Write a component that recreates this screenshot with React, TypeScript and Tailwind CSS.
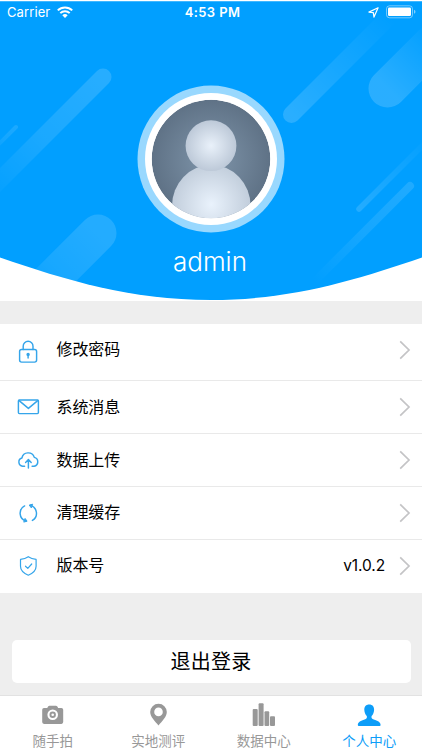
import type { ReactNode } from "react";

interface MenuRow {
  label: string;
  icon: ReactNode;
  height: string;
  value?: string;
}

interface TabItem {
  label: string;
  icon: ReactNode;
  active?: boolean;
}

const lineIcon = {
  width: 24,
  height: 24,
  viewBox: "0 0 24 24",
  fill: "none",
  stroke: "#35a5ea",
  strokeWidth: 1.45,
  strokeLinecap: "round" as const,
  strokeLinejoin: "round" as const,
};

const rows: MenuRow[] = [
  {
    label: "修改密码",
    height: "h-[57px] pb-[5px]",
    icon: (
      <svg {...lineIcon} className="relative top-[2px]">
        <path d="M7.2 9.5V6.2a4.9 4.9 0 0 1 9.8 0v3.3" />
        <rect x="3.6" y="9.5" width="17" height="12.6" rx="2" />
        <circle cx="12.1" cy="14.4" r="1" fill="#35a5ea" />
        <path d="M12.1 15v3" />
      </svg>
    ),
  },
  {
    label: "系统消息",
    height: "h-[53px]",
    icon: (
      <svg {...lineIcon}>
        <rect x="2.4" y="5" width="20" height="13.6" rx="1" />
        <path d="M2.8 5.4 12.4 13.4l9.6-8" />
      </svg>
    ),
  },
  {
    label: "数据上传",
    height: "h-[53px]",
    icon: (
      <svg {...lineIcon}>
        <path d="M8.6 18.2H6.6A4.2 4.2 0 0 1 5.9 10a6.4 6.4 0 0 1 12.4-.6 4.5 4.5 0 0 1-.2 8.8h-2" />
        <path d="M12.4 20v-8M9.6 14.4l2.8-2.8 2.8 2.8" />
      </svg>
    ),
  },
  {
    label: "清理缓存",
    height: "h-[53px] pb-[1px]",
    icon: (
      <svg {...lineIcon}>
        <path d="M8.6 4.9A8.2 8.2 0 0 0 9.8 20M16.4 19.4A8.2 8.2 0 0 0 14.4 4.4" />
        <path d="M16.3 3.3 13.2 4.1l1.9 2.5zM8.1 21l3-.8-1.8-2.5z" fill="#35a5ea" strokeWidth="1" />
      </svg>
    ),
  },
  {
    label: "版本号",
    height: "h-[53px] pb-[2px]",
    value: "v1.0.2",
    icon: (
      <svg {...lineIcon} strokeWidth={1.2}>
        <path d="M12.3 2.7c2.4 1.7 5 2.4 7.8 2.7v6.8c0 4.4-3.7 7.2-7.8 9-4.1-1.8-7.8-4.6-7.8-9V5.4c2.8-.3 5.4-1 7.8-2.7Z" />
        <path d="m9.5 12.2 2.3 2.2 3.9-4.4" />
      </svg>
    ),
  },
];

const tabs: TabItem[] = [
  {
    label: "随手拍",
    icon: (
      <svg width="24" height="24" viewBox="0 0 24 24" fill="currentColor">
        <path
          fillRule="evenodd"
          d="M6.6 4.2Q7.1 2.7 8.4 2.7h6.6q1.3 0 1.8 1.5l.3.7h3.3q1.8 0 1.8 1.8v12.4q0 1.8-1.8 1.8H3q-1.800 0-1.800-1.800V6.700Q1.200 4.900 3 4.900h3.300zM11.700 6.500a5.300 5.300 0 1 0 0 10.600 5.300 5.300 0 0 0 0-10.600zm0 2.100a3.200 3.200 0 1 1 0 6.400 3.200 3.200 0 0 1 0-6.400zm0 1.900a1.300 1.300 0 1 0 0 2.600 1.300 1.300 0 0 0 0-2.600z"
        />
      </svg>
    ),
  },
  {
    label: "实地测评",
    icon: (
      <svg width="24" height="24" viewBox="0 0 24 24" fill="currentColor">
        <path
          fillRule="evenodd"
          d="M12.5.7a8.3 8.3 0 0 1 8.3 8.3c0 5-4.6 8.8-8.3 13.6C8.8 17.8 4.2 14 4.2 9A8.3 8.3 0 0 1 12.5.7zm0 3.9a4.3 4.3 0 1 0 0 8.6 4.3 4.3 0 0 0 0-8.6z"
        />
      </svg>
    ),
  },
  {
    label: "数据中心",
    icon: (
      <svg width="24" height="24" viewBox="0 0 24 24" fill="currentColor">
        <rect x=".7" y="6" width="5" height="17" rx="1" />
        <rect x="6.6" y=".3" width="5" height="22.7" rx="1" />
        <rect x="12.5" y="8.2" width="4.7" height="14.8" rx="1" />
        <rect x="18" y="13.2" width="5" height="9.8" rx="1" />
      </svg>
    ),
  },
  {
    label: "个人中心",
    active: true,
    icon: (
      <svg width="24" height="24" viewBox="0 0 24 24" fill="currentColor">
        <path d="M12.2 1.4c3.3 0 5 2.2 4.9 5.3-.1 3-1.2 4.9-2.5 6.3-.5 2 .3 2.8 2.2 3.5 3.8 1.3 6.6 2.3 6.8 5.4q0 1.1-1 1.1H1.8q-1 0-1-1.1c.2-3.1 3-4.1 6.8-5.4 1.9-.7 2.7-1.5 2.2-3.5-1.3-1.4-2.4-3.3-2.5-6.3C7.2 3.6 8.9 1.4 12.2 1.4z" />
      </svg>
    ),
  },
];

function StatusBar() {
  return (
    <div className="grid grid-cols-3 items-center h-[22px] pl-[7px] pr-[6px] text-white text-[13px] leading-none">
      <div className="flex items-center gap-[7px]">
        <span className="tracking-[0.1px]">Carrier</span>
        <svg width="16" height="12" viewBox="0 0 16 12" fill="none" stroke="#fff" strokeWidth="2">
          <path d="M.8 4.4a10.3 10.3 0 0 1 14.4 0M3.3 7.1a6.7 6.7 0 0 1 9.4 0" />
          <path d="M5.3 9.2a4 4 0 0 1 5.4 0L8 12z" fill="#fff" stroke="none" />
        </svg>
      </div>
      <span className="pl-[2px] text-center font-semibold tracking-[0.4px] whitespace-nowrap">4:53 PM</span>
      <div className="flex items-center justify-end">
        <svg width="11" height="11" viewBox="0 0 11 11" fill="none" stroke="#fff" strokeWidth="1.2" strokeLinejoin="round">
          <path d="M10.1.8.9 5.1l4.4.5.7 4.5z" />
        </svg>
        <svg className="ml-[7px]" width="30" height="14" viewBox="0 0 30 14">
          <rect x=".5" y=".8" width="26" height="12" rx="3" fill="none" stroke="#fff" strokeOpacity=".45" />
          <rect x="2" y="2.6" width="23" height="8.4" rx="1.2" fill="#fff" />
          <path d="M28 4.8q1.5.6 1.5 2t-1.5 2z" fill="#fff" fillOpacity=".5" />
        </svg>
      </div>
    </div>
  );
}

// Blue curved backdrop with the diagonal light streaks
function HeaderBackdrop() {
  return (
    <svg className="absolute inset-0" width="422" height="301" viewBox="0 0 422 301">
      <defs>
        <clipPath id="curve">
          <path d="M0 1.3H422V257.5C356 280 292 300 211 300S66 280 0 257.5Z" />
        </clipPath>
        <linearGradient id="fadeDown" x1="1" y1="0" x2="0" y2="1">
          <stop offset="0" stopColor="#fff" stopOpacity=".15" />
          <stop offset=".5" stopColor="#fff" stopOpacity=".1" />
          <stop offset="1" stopColor="#fff" stopOpacity="0" />
        </linearGradient>
        <linearGradient id="fadeUp" x1="0" y1="1" x2="1" y2="0">
          <stop offset="0" stopColor="#fff" stopOpacity=".16" />
          <stop offset="1" stopColor="#fff" stopOpacity="0" />
        </linearGradient>
      </defs>
      <g clipPath="url(#curve)">
        <rect width="422" height="301" fill="#019fff" />
        <g fill="none" strokeLinecap="round">
          <path d="M103 77-18 198" stroke="url(#fadeDown)" strokeWidth="17" />
          <path d="M16 127-10 153" stroke="url(#fadeDown)" strokeWidth="4" strokeOpacity=".7" />
          <path d="M98 233 20 311" stroke="url(#fadeDown)" strokeWidth="37" strokeOpacity=".9" />
          <path d="M291.5 114.5 390 16" stroke="url(#fadeUp)" strokeWidth="17" />
          <path d="M387.5 88.5 440 36" stroke="url(#fadeUp)" strokeWidth="38" />
          <path d="M359 209 432 136" stroke="url(#fadeUp)" strokeWidth="5.5" strokeOpacity=".85" />
          <path d="M410 186 314 282" stroke="url(#fadeDown)" strokeWidth="8" strokeOpacity=".8" />
        </g>
      </g>
    </svg>
  );
}

function Avatar() {
  return (
    <svg width="148" height="148" viewBox="0 0 148 148">
      <defs>
        <radialGradient id="ground">
          <stop offset="0" stopColor="#7f95aa" />
          <stop offset="1" stopColor="#5f7286" />
        </radialGradient>
        <radialGradient id="head">
          <stop offset="0" stopColor="#e9f1fa" />
          <stop offset="1" stopColor="#bdc9d8" />
        </radialGradient>
        <radialGradient id="body" cx=".5" cy=".48" r=".52">
          <stop offset="0" stopColor="#e9f2fc" />
          <stop offset="1" stopColor="#c0ccda" />
        </radialGradient>
        <clipPath id="disc">
          <circle cx="74" cy="74" r="59.3" />
        </clipPath>
      </defs>
      <circle cx="74" cy="74" r="73.5" fill="#99d8fe" />
      <circle cx="74" cy="74" r="66" fill="#fff" />
      <g clipPath="url(#disc)">
        <circle cx="74" cy="74" r="59.3" fill="url(#ground)" />
        <ellipse cx="74.3" cy="121" rx="39.3" ry="41" fill="url(#body)" />
        <circle cx="74" cy="60.7" r="25.4" fill="url(#head)" />
      </g>
    </svg>
  );
}

function Chevron() {
  return (
    <svg width="12" height="20" viewBox="0 0 12 20" fill="none" stroke="#c4c4c6" strokeWidth="1.7">
      <path d="m1.2 1.4 8.8 8.6-8.8 8.6" />
    </svg>
  );
}

export default function App() {
  return (
    <div className="flex flex-col w-[422px] h-[750px] overflow-hidden bg-[#eeeeee] text-black font-['Inter','Noto_Sans_CJK_SC',sans-serif]">
      <header className="relative h-[301px] bg-white">
        <HeaderBackdrop />
        <div className="relative flex flex-col items-center pt-[1px]">
          <div className="w-full">
            <StatusBar />
          </div>
          <div className="mt-[62px]">
            <Avatar />
          </div>
          <h1 className="mt-[13px] pr-[2px] text-[26px] leading-[32px] font-light text-white font-['Inter',sans-serif]">
            admin
          </h1>
        </div>
      </header>

      <ul className="mt-[23px] bg-white">
        {rows.map((row) => (
          <li
            key={row.label}
            className={`flex items-center pl-4 pr-[11px] border-b border-[#e9e9e9] last:border-0 ${row.height}`}
          >
            {row.icon}
            <span className="ml-[16.5px] flex-1 pb-[1px] text-[16px] leading-6 tracking-[-0.1px]">{row.label}</span>
            {row.value && <span className="mr-[14px] text-[15.5px] leading-6 tracking-[-0.1px]">{row.value}</span>}
            <Chevron />
          </li>
        ))}
      </ul>

      <button
        type="button"
        className="mt-[47px] mx-[11.5px] h-[43px] rounded-[5px] bg-white text-[20px] leading-none tracking-[0.2px]"
      >
        退出登录
      </button>

      <nav className="mt-auto grid grid-cols-4 h-[55px] border-t border-[#e2e2e2] bg-white">
        {tabs.map((tab) => (
          <div
            key={tab.label}
            className={`flex flex-col items-center pt-[7px] ${tab.active ? "text-[#0d9df8]" : "text-[#989898]"}`}
          >
            {tab.icon}
            <span className="mt-[5px] text-[13.5px] leading-[18px]">{tab.label}</span>
          </div>
        ))}
      </nav>
    </div>
  );
}
